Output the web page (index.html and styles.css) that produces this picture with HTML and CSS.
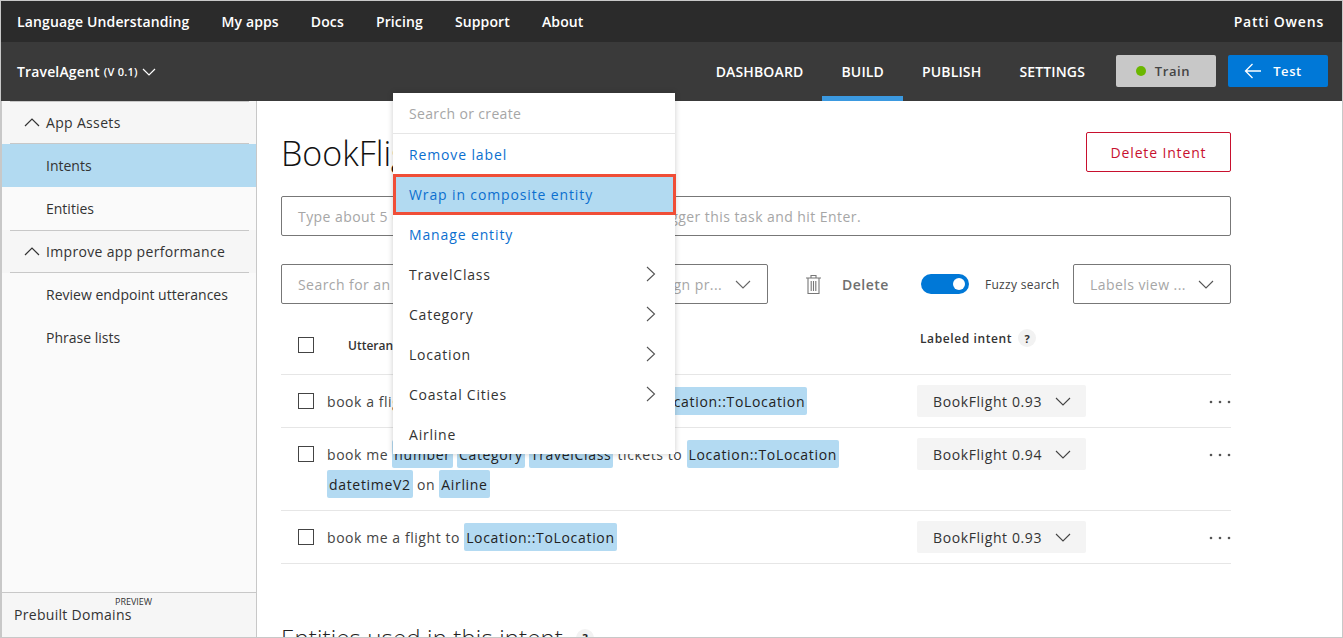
FILE: index.html
```html
<!DOCTYPE html>
<html lang="en">
<head>
<meta charset="utf-8">
<title>Language Understanding</title>
<link rel="stylesheet" href="styles.css">
</head>
<body>
<div class="app">
  <header class="topbar">
    <nav class="topnav">
      <a>Language Understanding</a><a>My apps</a><a>Docs</a><a>Pricing</a><a>Support</a><a>About</a>
    </nav>
    <span class="user">Patti Owens</span>
  </header>
  <div class="appbar">
    <div class="appname">TravelAgent <small>(V 0.1)</small>
      <svg class="chev" width="14" height="8" viewBox="0 0 14 8"><path d="M1 1l6 6 6-6" fill="none" stroke="#fff" stroke-width="1.2"/></svg>
    </div>
    <nav class="tabs">
      <a>DASHBOARD</a><a class="active">BUILD</a><a>PUBLISH</a><a>SETTINGS</a>
    </nav>
    <button class="btn train"><i class="dot"></i>Train</button>
    <button class="btn test">
      <svg width="18" height="16" viewBox="0 0 18 16"><path d="M17 8H1.5M8.5 1L1.5 8l7 7" fill="none" stroke="#fff" stroke-width="1.3"/></svg>Test</button>
  </div>
  <div class="body">
    <aside class="sidebar">
      <div class="side-head"><div class="side-head-in">
        <svg width="16" height="9" viewBox="0 0 16 9"><path d="M1 8l7-7 7 7" fill="none" stroke="#333" stroke-width="1.2"/></svg>App Assets</div></div>
      <a class="side-item selected">Intents</a>
      <a class="side-item">Entities</a>
      <div class="side-head"><div class="side-head-in">
        <svg width="16" height="9" viewBox="0 0 16 9"><path d="M1 8l7-7 7 7" fill="none" stroke="#333" stroke-width="1.2"/></svg>Improve app performance</div></div>
      <a class="side-item">Review endpoint utterances</a>
      <a class="side-item">Phrase lists</a>
      <div class="prebuilt"><span class="preview">PREVIEW</span>Prebuilt Domains</div>
    </aside>
    <main class="main">
      <div class="title-row">
        <h1>BookFlight</h1>
        <button class="delete-intent">Delete Intent</button>
      </div>
      <div class="field full">Type about 5 examples of what a user might say to trigger this task and hit Enter.</div>
      <div class="toolbar">
        <div class="field search">Search for an example</div>
        <div class="field assign">Assign pr...
          <svg width="16" height="9" viewBox="0 0 16 9"><path d="M1 1l7 7 7-7" fill="none" stroke="#666" stroke-width="1.1"/></svg>
        </div>
        <svg class="trash" width="17" height="21" viewBox="0 0 17 21"><path d="M1 4h15M3 4v15.5h11V4M6 4V1.5h5V4M6.2 7v10M8.5 7v10M10.8 7v10" fill="none" stroke="#777" stroke-width="1.1"/></svg>
        <span class="del-label">Delete</span>
        <span class="toggle"><i></i></span>
        <span class="fuzzy">Fuzzy search</span>
        <div class="field labels">Labels view ...
          <svg width="16" height="9" viewBox="0 0 16 9"><path d="M1 1l7 7 7-7" fill="none" stroke="#555" stroke-width="1.1"/></svg>
        </div>
      </div>
      <div class="row head">
        <span class="check"></span>
        <span class="h-utt">Utterance</span>
        <span class="h-int">Labeled intent <b class="help">?</b></span>
      </div>
      <div class="row">
        <span class="check"></span>
        <div class="utt">book a flight from <mark>Location::FromLocation</mark> to <mark class="far">Location::ToLocation</mark></div>
        <div class="intent">BookFlight 0.93<svg width="16" height="9" viewBox="0 0 16 9"><path d="M1 1l7 7 7-7" fill="none" stroke="#444" stroke-width="1.1"/></svg></div>
        <svg class="more" width="22" height="4" viewBox="0 0 22 4"><circle cx="2" cy="2" r="1.3"/><circle cx="11" cy="2" r="1.3"/><circle cx="20" cy="2" r="1.3"/></svg>
      </div>
      <div class="row">
        <span class="check"></span>
        <div class="utt">book me <mark>number</mark> <mark>Category</mark> <mark>TravelClass</mark> tickets to <mark>Location::ToLocation</mark> <mark>datetimeV2</mark> on <mark>Airline</mark></div>
        <div class="intent">BookFlight 0.94<svg width="16" height="9" viewBox="0 0 16 9"><path d="M1 1l7 7 7-7" fill="none" stroke="#444" stroke-width="1.1"/></svg></div>
        <svg class="more" width="22" height="4" viewBox="0 0 22 4"><circle cx="2" cy="2" r="1.3"/><circle cx="11" cy="2" r="1.3"/><circle cx="20" cy="2" r="1.3"/></svg>
      </div>
      <div class="row">
        <span class="check"></span>
        <div class="utt">book me a flight to <mark>Location::ToLocation</mark></div>
        <div class="intent">BookFlight 0.93<svg width="16" height="9" viewBox="0 0 16 9"><path d="M1 1l7 7 7-7" fill="none" stroke="#444" stroke-width="1.1"/></svg></div>
        <svg class="more" width="22" height="4" viewBox="0 0 22 4"><circle cx="2" cy="2" r="1.3"/><circle cx="11" cy="2" r="1.3"/><circle cx="20" cy="2" r="1.3"/></svg>
      </div>
      <h2>Entities used in this intent <b class="help">?</b></h2>
    </main>
  </div>
  <div class="menu">
    <div class="menu-search">Search or create</div>
    <a class="mi link">Remove label</a>
    <a class="mi link wrap">Wrap in composite entity</a>
    <a class="mi link">Manage entity</a>
    <a class="mi">TravelClass<svg width="10" height="16" viewBox="0 0 10 16"><path d="M1 1l7.5 7L1 15" fill="none" stroke="#555" stroke-width="1.1"/></svg></a>
    <a class="mi">Category<svg width="10" height="16" viewBox="0 0 10 16"><path d="M1 1l7.5 7L1 15" fill="none" stroke="#555" stroke-width="1.1"/></svg></a>
    <a class="mi">Location<svg width="10" height="16" viewBox="0 0 10 16"><path d="M1 1l7.5 7L1 15" fill="none" stroke="#555" stroke-width="1.1"/></svg></a>
    <a class="mi">Coastal Cities<svg width="10" height="16" viewBox="0 0 10 16"><path d="M1 1l7.5 7L1 15" fill="none" stroke="#555" stroke-width="1.1"/></svg></a>
    <a class="mi">Airline</a>
  </div>
</div>
</body>
</html>
```
FILE: styles.css
```css
* { box-sizing: border-box; }
html, body { margin: 0; height: 100%; overflow: hidden; }
body { font-family: "Open Sans", "Noto Sans", sans-serif; font-size: 14px; color: #333; background: #fff; }
.app { position: relative; width: 1343px; height: 638px; border: 1px solid #c8c8c8; display: flex; flex-direction: column; overflow: hidden; }

.topbar { height: 41px; flex: none; background: #2b2b2b; color: #fff; display: flex; align-items: center; justify-content: space-between; padding: 0 18px 0 16px; font-weight: 600; font-size: 14px; letter-spacing: .13px; }
.topnav { display: flex; gap: 32px; }
.user { letter-spacing: .8px; }
.appbar { height: 59px; flex: none; background: #3a3a3a; color: #fff; display: flex; align-items: center; padding-left: 16px; padding-right: 14px; }
.appname { font-weight: 600; font-size: 14px; letter-spacing: .15px; display: flex; align-items: center; gap: 4px; margin-right: auto; }
.appname small { font-size: 11px; letter-spacing: .25px; }
.tabs { display: flex; align-self: stretch; margin-right: 12px; }
.tabs a { display: flex; align-items: center; padding: 5px 19px 0; font-weight: 600; font-size: 14px; letter-spacing: .15px; border-bottom: 5px solid transparent; }
.tabs a.active { border-bottom-color: #3b99e0; }
.btn { width: 100px; height: 32px; margin-bottom: 1px; border: 0; border-radius: 2px; font: 600 13px "Open Sans", sans-serif; letter-spacing: .6px; display: flex; align-items: center; justify-content: center; }
.train { background: #c8c8c8; color: #444; gap: 9px; margin-right: 12px; padding-right: 12px; }
.dot { width: 10px; height: 10px; border-radius: 50%; background: #6bb700; }
.test { background: #0078d7; color: #fff; gap: 11px; padding-right: 16px; }

.body { flex: 1; display: flex; min-height: 0; }
.sidebar { width: 256px; flex: none; background: #fafafa; border-left: 1px solid #c8c8c8; border-right: 1px solid #c8c8c8; display: flex; flex-direction: column; font-size: 14px; }
.side-head { height: 43px; padding: 0 7px 0 8px; background: #f6f6f6; }
.side-head-in { height: 100%; padding-left: 14px; border-top: 1px solid #c8c8c8; border-bottom: 1px solid #c8c8c8; display: flex; align-items: center; gap: 6px; font-weight: 500; letter-spacing: .33px; }
.side-item { height: 43px; padding-left: 44px; display: flex; align-items: center; }
.selected { background: #b2daf1; }
.prebuilt { margin-top: auto; height: 45px; background: #f6f6f6; border-top: 1px solid #c8c8c8; padding: 12px 0 0 12px; position: relative; letter-spacing: .3px; }
.preview { position: absolute; left: 113px; top: 2px; font-size: 9px; letter-spacing: 0; }

.main { flex: 1; min-width: 0; padding: 0 111px 0 24px; overflow: hidden; }
.title-row { display: flex; justify-content: space-between; align-items: center; margin-top: 31px; height: 40px; }
h1 { margin: 0; padding-top: 2px; font-size: 34px; font-weight: 300; color: #111; }
.delete-intent { width: 145px; height: 40px; background: #fff; border: 1px solid #c8102e; border-radius: 2px; color: #c8102e; font: 500 14px "Open Sans", sans-serif; letter-spacing: .85px; }
.field { height: 40px; border: 1px solid #777; border-radius: 2px; display: flex; align-items: center; padding-left: 16px; color: #a6a6a6; letter-spacing: .44px; white-space: nowrap; }
.full { margin-top: 24px; }
.toolbar { margin-top: 28px; height: 40px; display: flex; align-items: center; }
.search { width: 240px; }
.assign { width: 247px; justify-content: space-between; padding-right: 16px; padding-left: 124px; }
.trash { margin-left: 37px; }
.del-label { margin-left: 20px; font-weight: 600; color: #6f6f6f; letter-spacing: .5px; }
.toggle { margin-left: 32px; width: 48px; height: 20px; border-radius: 10px; background: #0078d7; display: flex; align-items: center; justify-content: flex-end; padding-right: 4px; }
.toggle i { width: 12px; height: 12px; border-radius: 50%; background: #fff; }
.fuzzy { margin-left: 16px; font-size: 12px; color: #444; white-space: nowrap; letter-spacing: .3px; }
.labels { margin-left: auto; width: 158px; justify-content: space-between; padding-right: 16px; }

.row { display: grid; grid-template-columns: 46px 590px 1fr auto; border-bottom: 1px solid #e6e6e6; padding: 12px 0 10px; }
.row.head { height: 71px; padding: 0; align-items: center; }
.check { width: 16px; height: 16px; margin: 6px 0 0 17px; border: 1px solid #444; display: block; }
.row.head .check { margin-top: 12px; }
.h-utt { padding: 12px 0 0 21px; font-size: 12px; font-weight: 600; }
.h-int { padding: 0 0 2px 3px; font-size: 12px; font-weight: 600; letter-spacing: .6px; display: flex; align-items: center; gap: 6px; }
.help { width: 18px; height: 18px; border-radius: 50%; background: #f2f2f2; display: inline-flex; align-items: center; justify-content: center; font-size: 11px; font-weight: 700; letter-spacing: 0; }
.utt { line-height: 30px; color: #444; letter-spacing: .56px; }
mark { background: #b3daf2; color: #222; font-weight: 500; padding: 5px 2px 4px; border-radius: 2px; letter-spacing: .68px; }
.far { margin-left: 2px; }
.intent { width: 169px; height: 32px; margin-top: -2px; background: #f4f4f4; border-radius: 2px; display: flex; align-items: center; justify-content: space-between; padding: 0 15px 0 16px; letter-spacing: .6px; }
.more { margin-top: 13px; fill: #555; }
h2 { margin: 57px 0 0; font-size: 24px; font-weight: 300; letter-spacing: .15px; color: #222; display: flex; align-items: center; gap: 13px; white-space: nowrap; }

.menu { position: absolute; left: 392px; top: 92px; width: 282px; height: 361px; background: #fff; box-shadow: 0 0 6px rgba(0,0,0,.2); }
.menu-search { height: 41px; border-bottom: 1px solid #e6e6e6; padding-left: 16px; display: flex; align-items: center; color: #a6a6a6; letter-spacing: .35px; }
.mi { height: 40px; padding: 0 19px 0 16px; display: flex; align-items: center; justify-content: space-between; font-weight: 500; color: #333; letter-spacing: .78px; }
.link { color: #0b6fcf; letter-spacing: .87px; }
.wrap { height: 41px; margin: 0 -1px -1px 0; padding-left: 13px; background: #b2daf1; border: 3px solid #f04e37; }
```
